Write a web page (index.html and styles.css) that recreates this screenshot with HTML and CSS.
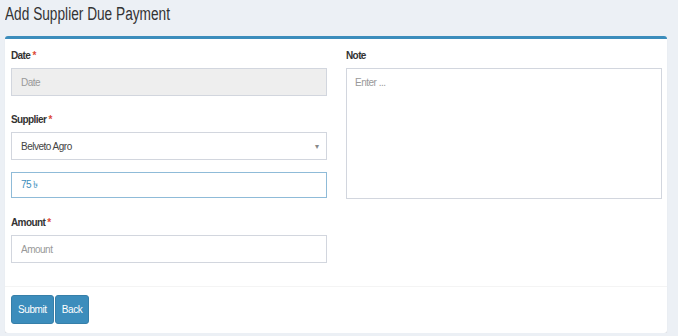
FILE: index.html
```html
<!DOCTYPE html>
<html lang="en">
<head>
  <meta charset="UTF-8">
  <title>Add Supplier Due Payment</title>
  <link rel="stylesheet" href="styles.css">
</head>
<body>
  <h1 class="titulo">Add Supplier Due Payment</h1>

  <div class="box">
    <div class="box-body">
      <div class="coluna">
        <div class="campo">
          <label>Date <span class="req">*</span></label>
          <input class="entrada desativada" type="text" placeholder="Date" disabled>
        </div>
        <div class="campo">
          <label>Supplier <span class="req">*</span></label>
          <div class="select">
            <span>Belveto Agro</span>
            <span class="seta">&#9662;</span>
          </div>
        </div>
        <div class="campo junto">
          <input class="entrada foco" type="text" value="75 ৳">
        </div>
        <div class="campo">
          <label>Amount <span class="req">*</span></label>
          <input class="entrada" type="text" placeholder="Amount">
        </div>
      </div>
      <div class="coluna">
        <div class="campo">
          <label>Note</label>
          <textarea class="entrada nota" placeholder="Enter ..."></textarea>
        </div>
      </div>
    </div>
    <div class="box-footer">
      <button class="btn">Submit</button>
      <button class="btn">Back</button>
    </div>
  </div>
</body>
</html>
```
FILE: styles.css
```css
body {
  margin: 0;
  padding: 0 11px 0 5px;
  background-color: #ecf0f5;
  font-family: "Liberation Sans", sans-serif;
  color: #333;
}

.titulo {
  margin: 0;
  padding: 4px 0 0 0;
  height: 36px;
  box-sizing: border-box;
  font-size: 18px;
  font-weight: normal;
  color: #333;
  white-space: nowrap;
  transform: scaleX(0.76);
  transform-origin: left;
}

.box {
  background: #fff;
  border-top: 3px solid #3c8dbc;
  border-radius: 3px;
  box-shadow: 0 1px 1px rgba(0, 0, 0, 0.1);
}

.box-body {
  display: grid;
  grid-template-columns: 316px 316px;
  column-gap: 19px;
  padding: 11px 5px 23px 6px;
}

.campo {
  margin-bottom: 18px;
}

.campo:last-child {
  margin-bottom: 0;
}

.junto {
  margin-top: -6px;
  margin-bottom: 19px;
}

label {
  display: block;
  font-size: 10px;
  font-weight: bold;
  letter-spacing: -0.6px;
  margin-bottom: 6px;
  height: 12px;
  line-height: 12px;
}

.req {
  color: #dd4b39;
}

.entrada {
  display: block;
  box-sizing: border-box;
  width: 100%;
  height: 28px;
  padding: 0 9px;
  border: 1px solid #d2d6de;
  font-family: inherit;
  font-size: 10px;
  letter-spacing: -0.5px;
  color: #555;
  background: #fff;
  outline: none;
}

.entrada::placeholder {
  color: #999;
}

.desativada {
  background: #eee;
}

.foco {
  border-color: #8fbbd8;
  color: #3c8dbc;
  height: 26px;
}

.select {
  box-sizing: border-box;
  height: 28px;
  border: 1px solid #d2d6de;
  padding: 0 8px 0 9px;
  display: flex;
  align-items: center;
  justify-content: space-between;
  font-size: 10px;
  letter-spacing: -0.5px;
  color: #444;
}

.seta {
  color: #888;
  font-size: 8px;
}

.nota {
  height: 131px;
  padding: 8px;
  resize: none;
}

.box-footer {
  border-top: 1px solid #f4f4f4;
  padding: 8px 6px 9px;
  display: flex;
  gap: 1px;
}

.btn {
  background: #3c8dbc;
  border: 1px solid #367fa9;
  border-radius: 3px;
  color: #fff;
  font-family: inherit;
  font-size: 10px;
  letter-spacing: -0.4px;
  height: 29px;
  padding: 0 6px;
}
```
